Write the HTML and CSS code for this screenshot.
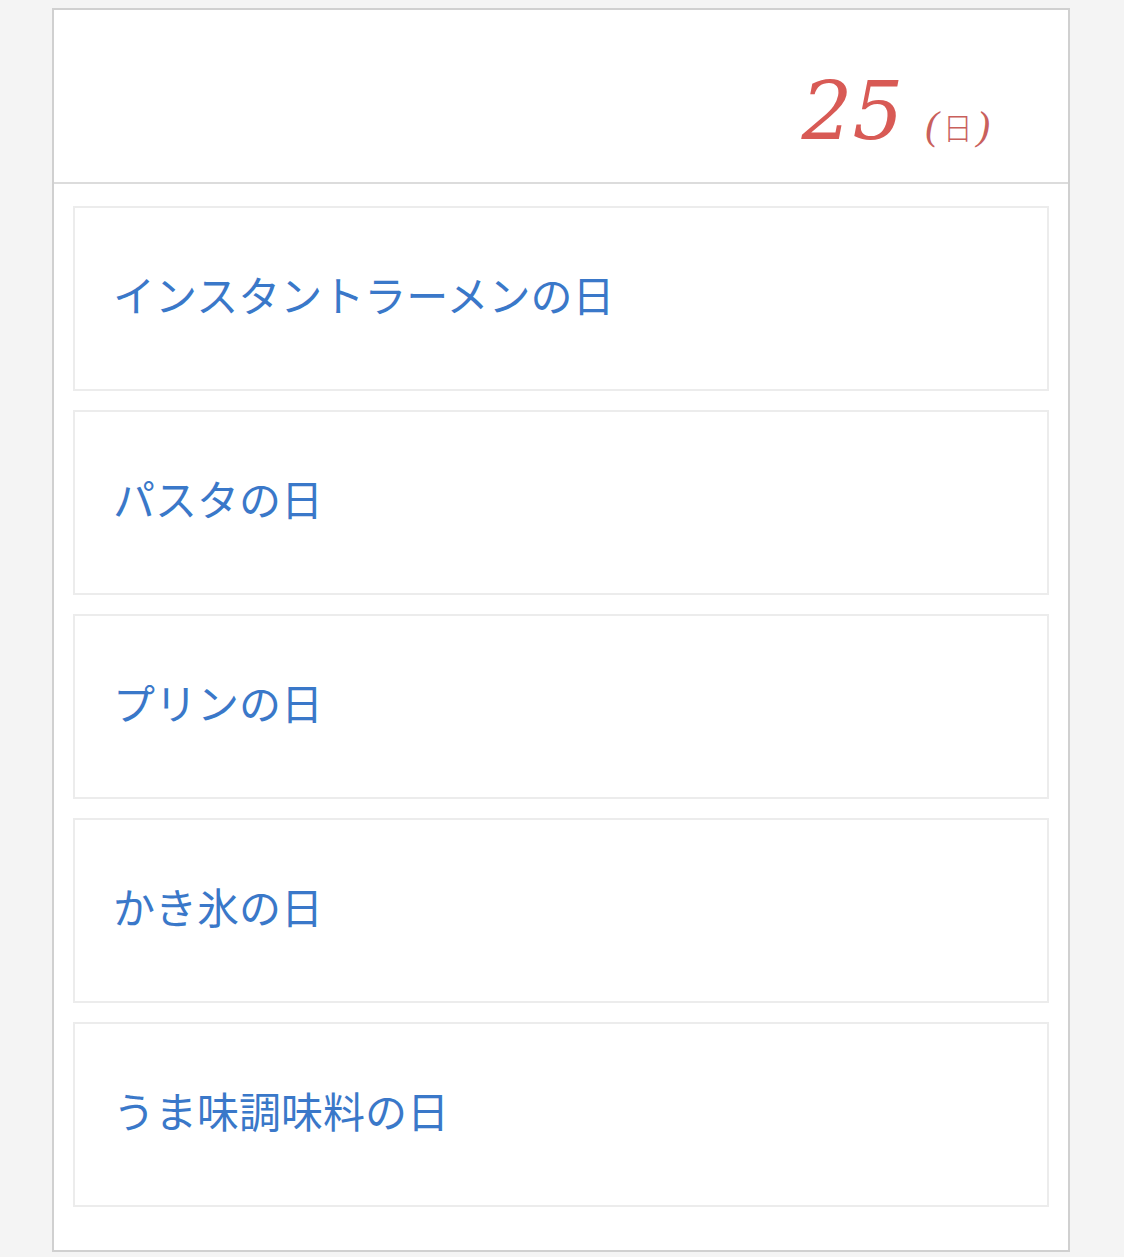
FILE: index.html
```html
<!DOCTYPE html>
<html lang="ja">
<head>
<meta charset="utf-8">
<title>25日の記念日</title>
<link rel="stylesheet" href="styles.css">
</head>
<body>
  <section class="day-card">
    <header class="day-head">
      <span class="day-num">25</span>
      <span class="day-week">(<span class="day-week-kanji">日</span>)</span>
    </header>
    <ul class="event-list">
      <li class="event-item"><a class="event-link" href="#">インスタントラーメンの日</a></li>
      <li class="event-item"><a class="event-link" href="#">パスタの日</a></li>
      <li class="event-item"><a class="event-link" href="#">プリンの日</a></li>
      <li class="event-item"><a class="event-link" href="#">かき氷の日</a></li>
      <li class="event-item"><a class="event-link" href="#">うま味調味料の日</a></li>
    </ul>
  </section>
</body>
</html>
```
FILE: styles.css
```css
html, body {
  margin: 0;
  padding: 0;
  background: #f4f4f4;
}

body {
  font-family: "Noto Sans CJK JP", "Noto Sans", sans-serif;
  padding-top: 8px;
  height: 1257px;
  box-sizing: border-box;
}

.day-card {
  box-sizing: border-box;
  width: 1018px;
  margin: 0 0 0 52px;
  background: #fff;
  border: 2px solid #d0d0d0;
}

/* date header */
.day-head {
  box-sizing: border-box;
  height: 174px;
  border-bottom: 2px solid #dcdcdc;
  display: flex;
  justify-content: flex-end;
  align-items: baseline;
  padding: 62px 78px 0 0;
}

.day-num {
  font-family: "DejaVu Serif", "Liberation Serif", serif;
  font-style: italic;
  font-size: 80px;
  line-height: 1;
  color: #d85a55;
}

.day-week {
  margin-left: 22px;
  font-family: "Liberation Serif", serif;
  font-style: italic;
  font-size: 40px;
  line-height: 1;
  color: #c9605c;
}

.day-week-kanji {
  font-family: "Noto Sans CJK JP", sans-serif;
  font-style: normal;
  font-weight: 300;
  font-size: 30px;
  margin: 0 4px;
}

/* event list */
.event-list {
  list-style: none;
  margin: 0;
  padding: 22px 19px 43px;
  display: flex;
  flex-direction: column;
  gap: 19px;
}

.event-item {
  box-sizing: border-box;
  height: 185px;
  border: 2px solid #ececec;
  display: flex;
  align-items: center;
  padding: 0 0 8px 38px;
}

.event-link {
  font-size: 42px;
  line-height: 1.2;
  color: #3a78c9;
  text-decoration: none;
}
```
